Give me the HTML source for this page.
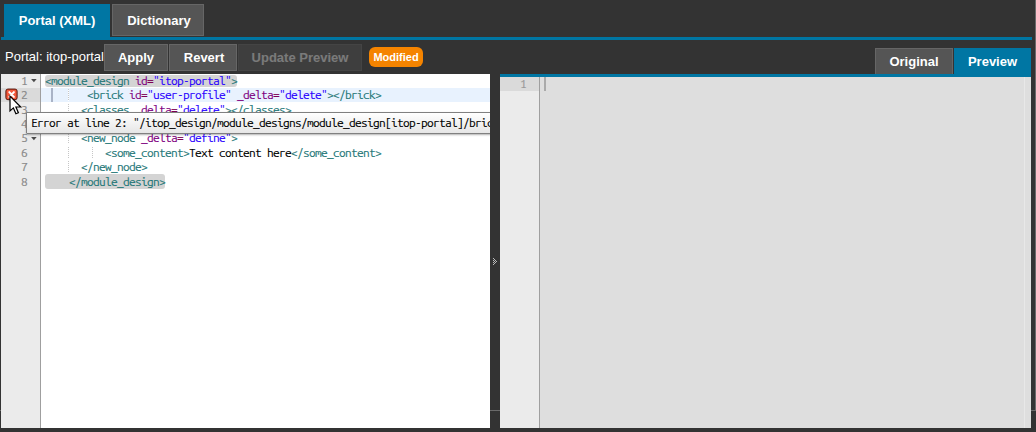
<!DOCTYPE html>
<html lang="en">
<head>
<meta charset="utf-8">
<title>Portal designer</title>
<style>
html,body{margin:0;padding:0;}
body{width:1036px;height:432px;background:#333;overflow:hidden;position:relative;
  font-family:"Liberation Sans",Arial,sans-serif;font-size:13px;color:#fff;}
.abs{position:absolute;}
/* frame lines behind panes */
#frameR{left:1035px;top:0;width:1px;height:411px;background:#6a6a6a;}
#frameB{left:0;top:410px;width:1036px;height:1px;background:#6a6a6a;}
/* top tabs */
.tab{position:absolute;box-sizing:border-box;font-weight:bold;font-size:13px;text-align:center;white-space:nowrap;}
#tab1{left:4px;top:4px;width:106px;height:36px;background:#0076a3;line-height:34px;}
#tab2{left:112px;top:4px;width:92px;height:32px;background:#555;border:1px solid #666;line-height:31px;padding-left:2px;}
#line1{left:1px;top:37px;width:1031px;height:3px;background:#0076a3;}
/* toolbar */
#ptitle{left:5px;top:49px;font-size:13px;line-height:16px;white-space:nowrap;}
.btn{position:absolute;box-sizing:border-box;top:44px;height:27px;background:#555;border:1px solid #666;
  font-weight:bold;font-size:13px;line-height:25px;text-align:center;white-space:nowrap;}
#b1{left:104px;width:64px;}
#b2{left:169px;width:68px;padding-left:2px;}
#b3{left:238px;width:124px;opacity:.35;}
#badge{left:369px;top:47px;width:54px;height:20px;border-radius:6px;background:#f58400;
  font-weight:bold;font-size:11px;line-height:20px;text-align:center;}
/* right tabs */
#rt1{left:875px;top:48px;width:78px;height:26px;background:#555;border:1px solid #666;border-bottom:none;line-height:25px;}
#rt2{left:954px;top:48px;width:77px;height:29px;background:#0076a3;line-height:27px;}
#line2{left:500px;top:74px;width:531px;height:3px;background:#0076a3;}
/* editors */
.mono{font-family:"Liberation Sans",sans-serif;font-size:12px;}
.m{font-family:"Ubuntu Mono","Liberation Mono",monospace;font-size:12px;letter-spacing:calc(6px - 1ch);line-height:0;white-space:pre;}
#edL{left:1px;top:74px;width:489px;height:354px;background:#fff;overflow:hidden;color:#000;}
#edR{left:500px;top:77px;width:531px;height:351px;background:#dedede;overflow:hidden;color:#000;}
.gutter{position:absolute;left:0;top:0;bottom:0;width:39px;background:#ebebeb;border-right:1px solid #9f9f9f;}
.ln{-webkit-text-stroke:0.15px;margin-top:-0.2px;position:absolute;left:0;width:26px;text-align:right;color:#888;height:14.4px;line-height:14.4px;}
.row{margin-top:-0.2px;-webkit-text-stroke:0.12px;position:absolute;left:44px;height:14.4px;line-height:14.4px;white-space:pre;}
.t{color:#267878;}.a{color:#7f007f;}.s{color:#2a00ff;}.k{color:#7f0055;}
.fold{position:absolute;left:29.6px;width:6px;height:4px;}
.guide{position:absolute;width:1px;height:12px;background:repeating-linear-gradient(to bottom,#c6c6c6 0,#c6c6c6 1px,#fff 1px,#fff 2px);}
.hl{position:absolute;background:#d4d4d4;border-radius:3px;}
#tip{-webkit-text-stroke:0.12px;left:25px;top:38px;width:600px;height:22px;box-sizing:border-box;border:1px solid #808080;border-radius:1px;
  background:linear-gradient(to bottom,#fff,#e6e6e6);box-shadow:0 1px 2px rgba(0,0,0,.3);
  padding:0 0 0 4px;line-height:20px;white-space:pre;color:#000;}
</style>
</head>
<body>
<div id="frameR" class="abs"></div>
<div id="frameB" class="abs"></div>

<div id="line1" class="abs"></div>
<div id="tab1" class="tab">Portal (XML)</div>
<div id="tab2" class="tab">Dictionary</div>

<div id="ptitle" class="abs">Portal: itop-portal</div>
<div id="b1" class="btn">Apply</div>
<div id="b2" class="btn">Revert</div>
<div id="b3" class="btn">Update Preview</div>
<div id="badge" class="abs">Modified</div>

<div id="rt1" class="tab">Original</div>
<div id="rt2" class="tab">Preview</div>
<div id="line2" class="abs"></div>

<!-- left editor -->
<div id="edL" class="abs mono">
  <div class="gutter">
    <div class="abs" style="left:0;top:14px;width:39px;height:14px;background:#dadada;"></div>
    <div class="ln" style="top:0px"><span class="m">1</span></div>
    <div class="ln" style="top:14.4px"><span class="m">2</span></div>
    <div class="ln" style="top:28.8px"><span class="m">3</span></div>
    <div class="ln" style="top:43.2px"><span class="m">4</span></div>
    <div class="ln" style="top:57.6px"><span class="m">5</span></div>
    <div class="ln" style="top:72px"><span class="m">6</span></div>
    <div class="ln" style="top:86.4px"><span class="m">7</span></div>
    <div class="ln" style="top:100.8px"><span class="m">8</span></div>
    <svg class="fold" style="top:5.3px" viewBox="0 0 6 4"><path d="M0.1 0 L5.7 0 L2.9 3.2 Z" fill="#4a4a4a"/></svg>
    <svg class="fold" style="top:62.9px" viewBox="0 0 6 4"><path d="M0.1 0 L5.7 0 L2.9 3.2 Z" fill="#4a4a4a"/></svg>
    <svg class="abs" style="left:4px;top:14px" width="13" height="13" viewBox="0 0 13 13">
      <rect x="0.9" y="1.1" width="11.2" height="10.6" rx="2" fill="#f2583a" stroke="#55150a" stroke-width="1"/>
      <path d="M4.3 4.1 L8.9 8.9 M8.9 4.1 L4.3 8.9" stroke="#fff" stroke-width="2" stroke-linecap="round" fill="none"/>
    </svg>
  </div>
  <!-- active line -->
  <div class="abs" style="left:40px;top:14px;width:449px;height:14px;background:#e8f2fe;"></div>
  <!-- tag highlights -->
  <div class="hl" style="left:44px;top:0.8px;width:192px;height:12.4px;"></div>
  <div class="hl" style="left:44px;top:100.1px;width:120px;height:14.8px;"></div>
  <!-- indent guides -->
  <div class="guide" style="left:67px;top:15px;"></div>
  <div class="guide" style="left:67px;top:30px;"></div>
  <div class="guide" style="left:67px;top:44px;"></div>
  <div class="guide" style="left:67px;top:58px;"></div>
  <div class="guide" style="left:67px;top:73px;"></div>
  <div class="guide" style="left:91px;top:73px;"></div>
  <div class="guide" style="left:67px;top:87px;"></div>
  <!-- cursor -->
  <div class="abs" style="left:50px;top:14px;width:2px;height:14px;background:#a9b3c6;"></div>
  <div class="row" style="top:0px"><span class="m"><span class="t">&lt;module_design</span> <span class="a">id</span><span class="k">=</span><span class="s">"itop-portal"</span><span class="t">&gt;</span></span></div>
  <div class="row" style="top:14.4px"><span class="m">       <span class="t">&lt;brick</span> <span class="a">id</span><span class="k">=</span><span class="s">"user-profile"</span> <span class="a">_delta</span><span class="k">=</span><span class="s">"delete"</span><span class="t">&gt;&lt;/brick&gt;</span></span></div>
  <div class="row" style="top:28.8px"><span class="m">      <span class="t">&lt;classes</span> <span class="a">_delta</span><span class="k">=</span><span class="s">"delete"</span><span class="t">&gt;&lt;/classes&gt;</span></span></div>
  <div class="row" style="top:43.2px"><span class="m">      <span class="t">&lt;bricks</span> <span class="a">_delta</span><span class="k">=</span><span class="s">"delete"</span><span class="t">&gt;&lt;/bricks&gt;</span></span></div>
  <div class="row" style="top:57.6px"><span class="m">      <span class="t">&lt;new_node</span> <span class="a">_delta</span><span class="k">=</span><span class="s">"define"</span><span class="t">&gt;</span></span></div>
  <div class="row" style="top:72px"><span class="m">          <span class="t">&lt;some_content&gt;</span>Text content here<span class="t">&lt;/some_content&gt;</span></span></div>
  <div class="row" style="top:86.4px"><span class="m">      <span class="t">&lt;/new_node&gt;</span></span></div>
  <div class="row" style="top:100.8px"><span class="m">    <span class="t">&lt;/module_design&gt;</span></span></div>
  <!-- tooltip -->
  <div id="tip" class="abs"><span class="m">Error at line 2: "/itop_design/module_designs/module_design[itop-portal]/bricks/brick[user-profile]" could not be deleted</span></div>
  <!-- mouse pointer -->
  <svg class="abs" style="left:8px;top:21px" width="14" height="21" viewBox="0 0 14 21">
    <path d="M1 1.2 L1 16 L4.4 12.9 L6.9 18.7 L9.4 17.7 L6.9 12 L11.7 12 Z" fill="#fff" stroke="#000" stroke-width="1.2" stroke-linejoin="miter"/>
  </svg>
</div>

<!-- splitter grip -->
<svg class="abs" style="left:492px;top:258px" width="6" height="8" viewBox="0 0 6 8" shape-rendering="crispEdges">
  <g fill="#bbb">
    <rect x="1" y="0" width="1" height="1"/>
    <rect x="2" y="1" width="1" height="1"/>
    <rect x="1" y="2" width="1" height="1"/><rect x="3" y="2" width="1" height="1"/>
    <rect x="2" y="3" width="1" height="1"/><rect x="4" y="3" width="1" height="1"/>
    <rect x="1" y="4" width="1" height="1"/><rect x="3" y="4" width="1" height="1"/>
    <rect x="2" y="5" width="1" height="1"/>
    <rect x="1" y="6" width="1" height="1"/>
  </g>
</svg>

<!-- right editor -->
<div id="edR" class="abs mono">
  <div class="gutter">
    <div class="abs" style="left:0;top:0;width:39px;height:14px;background:#dadada;"></div>
    <div class="ln" style="top:0px;color:#999;"><span class="m">1</span></div>
  </div>
  <div class="abs" style="left:524px;top:0;width:1px;height:351px;background:#e8e8e8;"></div>
  <div class="abs" style="left:44px;top:0;width:2px;height:14px;background:#aaa;"></div>
</div>
</body>
</html>
